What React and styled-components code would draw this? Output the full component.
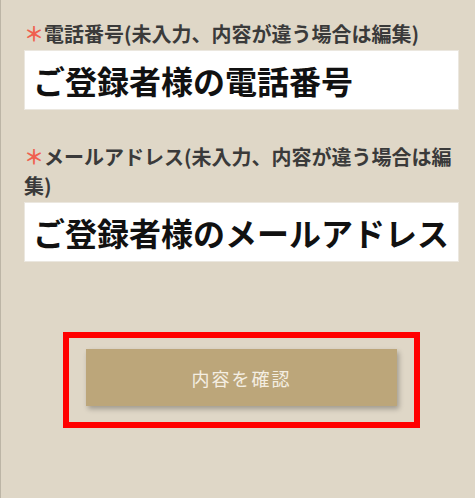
import React from "react";
import styled, { createGlobalStyle } from "styled-components";

const GlobalStyle = createGlobalStyle`
  html, body {
    margin: 0;
    padding: 0;
    background: #dfd7c7;
  }
  body {
    font-family: "Noto Sans CJK JP", "Noto Sans", sans-serif;
  }
`;

const Page = styled.div`
  box-sizing: border-box;
  min-height: 498px;
  background: #dfd7c7;
  border-left: 1px solid #bcb5a6;
  padding: 19px 16px 0 23px;
`;

const FieldGroup = styled.div`
  display: flex;
  flex-direction: column;
  gap: 2px;
  margin-bottom: ${(props) => props.$spacing || 0}px;
`;

const Label = styled.label`
  font-size: 20px;
  line-height: 29px;
  font-weight: 700;
  color: #3a3a3a;
`;

const Required = styled.span`
  color: #f0604f;
`;

const Field = styled.input`
  box-sizing: border-box;
  width: 100%;
  height: 60px;
  margin: 0;
  padding: 0 8px;
  border: 1px solid #ebe7df;
  background: #fff;
  font-family: "Noto Sans CJK JP", sans-serif;
  font-size: 32px;
  font-weight: 700;
  color: #111;
  outline: none;
`;

const Highlight = styled.div`
  box-sizing: border-box;
  width: 357px;
  margin: 0 auto;
  border: 6px solid #ff0000;
  padding: 11px 17px 16px;
`;

const ConfirmButton = styled.button`
  display: block;
  width: 311px;
  height: 57px;
  border: none;
  background: #bca67a;
  box-shadow: 2px 3px 5px rgba(0, 0, 0, 0.28);
  color: #f4eee2;
  font-family: "Noto Sans CJK JP", sans-serif;
  font-size: 18px;
  letter-spacing: 2px;
  cursor: pointer;
`;

export default function App() {
  return (
    <>
      <GlobalStyle />
      <Page>
        <FieldGroup $spacing={32}>
          <Label>
            <Required>＊</Required>電話番号(未入力、内容が違う場合は編集)
          </Label>
          <Field readOnly value="ご登録者様の電話番号" />
        </FieldGroup>
        <FieldGroup $spacing={70}>
          <Label>
            <Required>＊</Required>メールアドレス(未入力、内容が違う場合は編集)
          </Label>
          <Field readOnly value="ご登録者様のメールアドレス" />
        </FieldGroup>
        <Highlight>
          <ConfirmButton>内容を確認</ConfirmButton>
        </Highlight>
      </Page>
    </>
  );
}
